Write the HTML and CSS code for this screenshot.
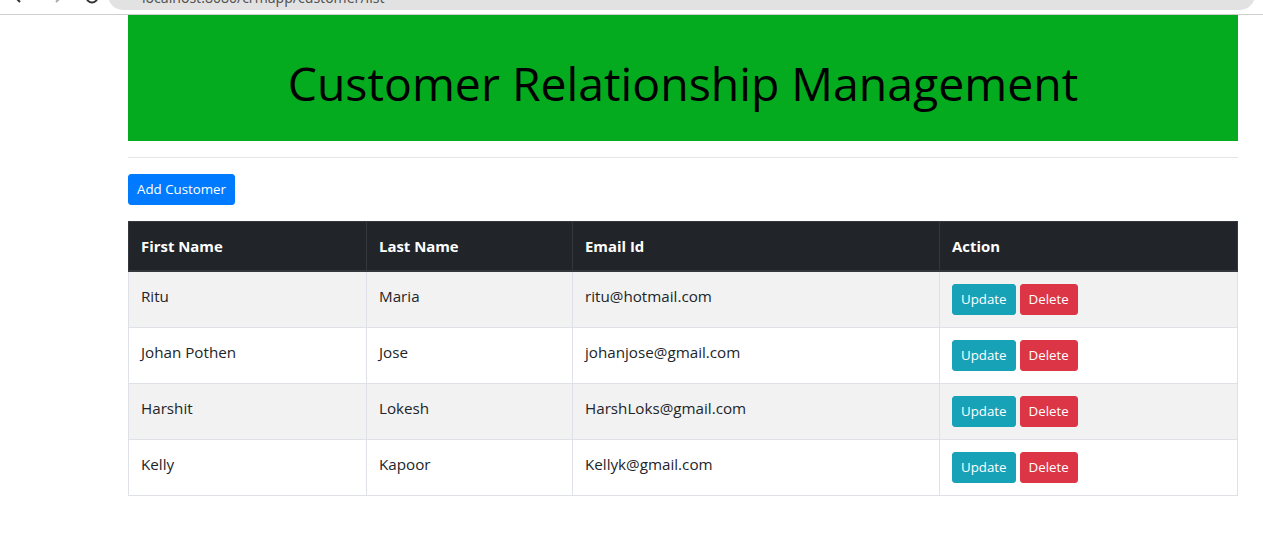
FILE: index.html
```html
<!DOCTYPE html>
<html lang="en">
<head>
<meta charset="utf-8">
<title>Customer List</title>
<link rel="stylesheet" href="styles.css">
</head>
<body>
<div class="chrome">
  <div class="nav-icons">
    <svg class="ic" width="16" height="16" viewBox="0 0 16 16"><path d="M14 8H3M8 3L3 8l5 5" fill="none" stroke="#333" stroke-width="2"/></svg>
    <svg class="ic" width="16" height="16" viewBox="0 0 16 16"><path d="M2 8h11M8 3l5 5-5 5" fill="none" stroke="#aaa" stroke-width="2"/></svg>
    <svg class="ic" width="16" height="16" viewBox="0 0 16 16"><circle cx="8" cy="8" r="5.5" fill="none" stroke="#333" stroke-width="2"/></svg>
  </div>
  <div class="omnibox">
    <svg width="14" height="14" viewBox="0 0 14 14"><circle cx="7" cy="7" r="6" fill="none" stroke="#666" stroke-width="1.5"/></svg>
    <span class="url">localhost:8080/crmapp/customer/list</span>
    <span class="spacer"></span>
    <svg width="14" height="14" viewBox="0 0 14 14"><rect x="2" y="1" width="10" height="11" fill="none" stroke="#666" stroke-width="1.3"/></svg>
    <svg width="14" height="14" viewBox="0 0 14 14"><path d="M7 1l1.8 4 4.2.4-3.2 2.8 1 4.2L7 10.2 3.2 12.4l1-4.2L1 5.4l4.2-.4z" fill="none" stroke="#666" stroke-width="1.3"/></svg>
  </div>
</div>
<div class="container">
  <div class="banner"><h1>Customer Relationship Management</h1></div>
  <hr class="divider">
  <button class="btn btn-primary">Add Customer</button>
  <table class="table">
    <thead>
      <tr><th class="c1">First Name</th><th class="c2">Last Name</th><th class="c3">Email Id</th><th class="c4">Action</th></tr>
    </thead>
    <tbody>
      <tr class="odd"><td>Ritu</td><td>Maria</td><td>ritu@hotmail.com</td><td><button class="btn btn-info">Update</button> <button class="btn btn-danger">Delete</button></td></tr>
      <tr><td>Johan Pothen</td><td>Jose</td><td>johanjose@gmail.com</td><td><button class="btn btn-info">Update</button> <button class="btn btn-danger">Delete</button></td></tr>
      <tr class="odd"><td>Harshit</td><td>Lokesh</td><td>HarshLoks@gmail.com</td><td><button class="btn btn-info">Update</button> <button class="btn btn-danger">Delete</button></td></tr>
      <tr><td>Kelly</td><td>Kapoor</td><td>Kellyk@gmail.com</td><td><button class="btn btn-info">Update</button> <button class="btn btn-danger">Delete</button></td></tr>
    </tbody>
  </table>
</div>
</body>
</html>
```

FILE: styles.css
```css
* { box-sizing: border-box; }
html, body { margin: 0; padding: 0; }
body {
  font-family: "Open Sans", "Noto Sans", sans-serif;
  font-size: 15.2px;
  line-height: 24px;
  color: #212529;
  background: #fff;
}
.chrome {
  height: 15px;
  border-bottom: 1px solid #cfcfcf;
  display: flex;
  align-items: flex-end;
  overflow: hidden;
}
.nav-icons {
  display: flex;
  gap: 20px;
  padding-left: 12px;
  width: 108px;
  align-self: flex-start;
  margin-top: -11px;
}
.omnibox {
  align-self: flex-start;
  margin-top: -20px;
  height: 30px;
  width: 1147px;
  background: #e2e2e2;
  border-radius: 0 0 15px 15px;
  display: flex;
  align-items: center;
  gap: 10px;
  padding: 0 12px 0 10px;
  font-family: "Noto Sans", sans-serif;
  font-size: 14px;
  line-height: 20px;
  color: #555;
}
.omnibox .url { position: relative; top: 3px; }
.omnibox .spacer { flex: 1; }
.omnibox svg { position: relative; top: -2px; }
.container {
  width: 1110px;
  margin-left: 128px;
}
.banner {
  background: #04ab1f;
  height: 126px;
  padding-top: 12px;
  display: flex;
  align-items: center;
  justify-content: center;
}
.banner h1 {
  margin: 0;
  font-size: 46.4px;
  font-weight: 500;
  color: #000;
  line-height: 1.2;
}
.divider {
  margin: 16px 0;
  border: 0;
  border-top: 1px solid rgba(0,0,0,.1);
  height: 0;
}
.btn {
  display: inline-block;
  font-family: inherit;
  font-size: 13.3px;
  line-height: 21px;
  padding: 4px 8px;
  border: 1px solid transparent;
  border-radius: 3px;
  color: #fff;
  cursor: pointer;
}
.btn-primary { background: #007bff; border-color: #007bff; }
.btn-info { background: #17a2b8; border-color: #17a2b8; }
.btn-danger { background: #dc3545; border-color: #dc3545; }
.table {
  width: 100%;
  margin-top: 16px;
  border-collapse: collapse;
  border: 1px solid #dee2e6;
}
.table th, .table td {
  padding: 12px;
  text-align: left;
  vertical-align: top;
  border: 1px solid #dee2e6;
}
.table thead th {
  background: #212529;
  color: #fff;
  font-size: 14.9px;
  font-weight: 700;
  border-color: #32383e;
  border-bottom-width: 2px;
}
.table tbody tr.odd { background: #f2f2f2; }
.c1 { width: 238px; }
.c2 { width: 206px; }
.c3 { width: 367px; }
```
